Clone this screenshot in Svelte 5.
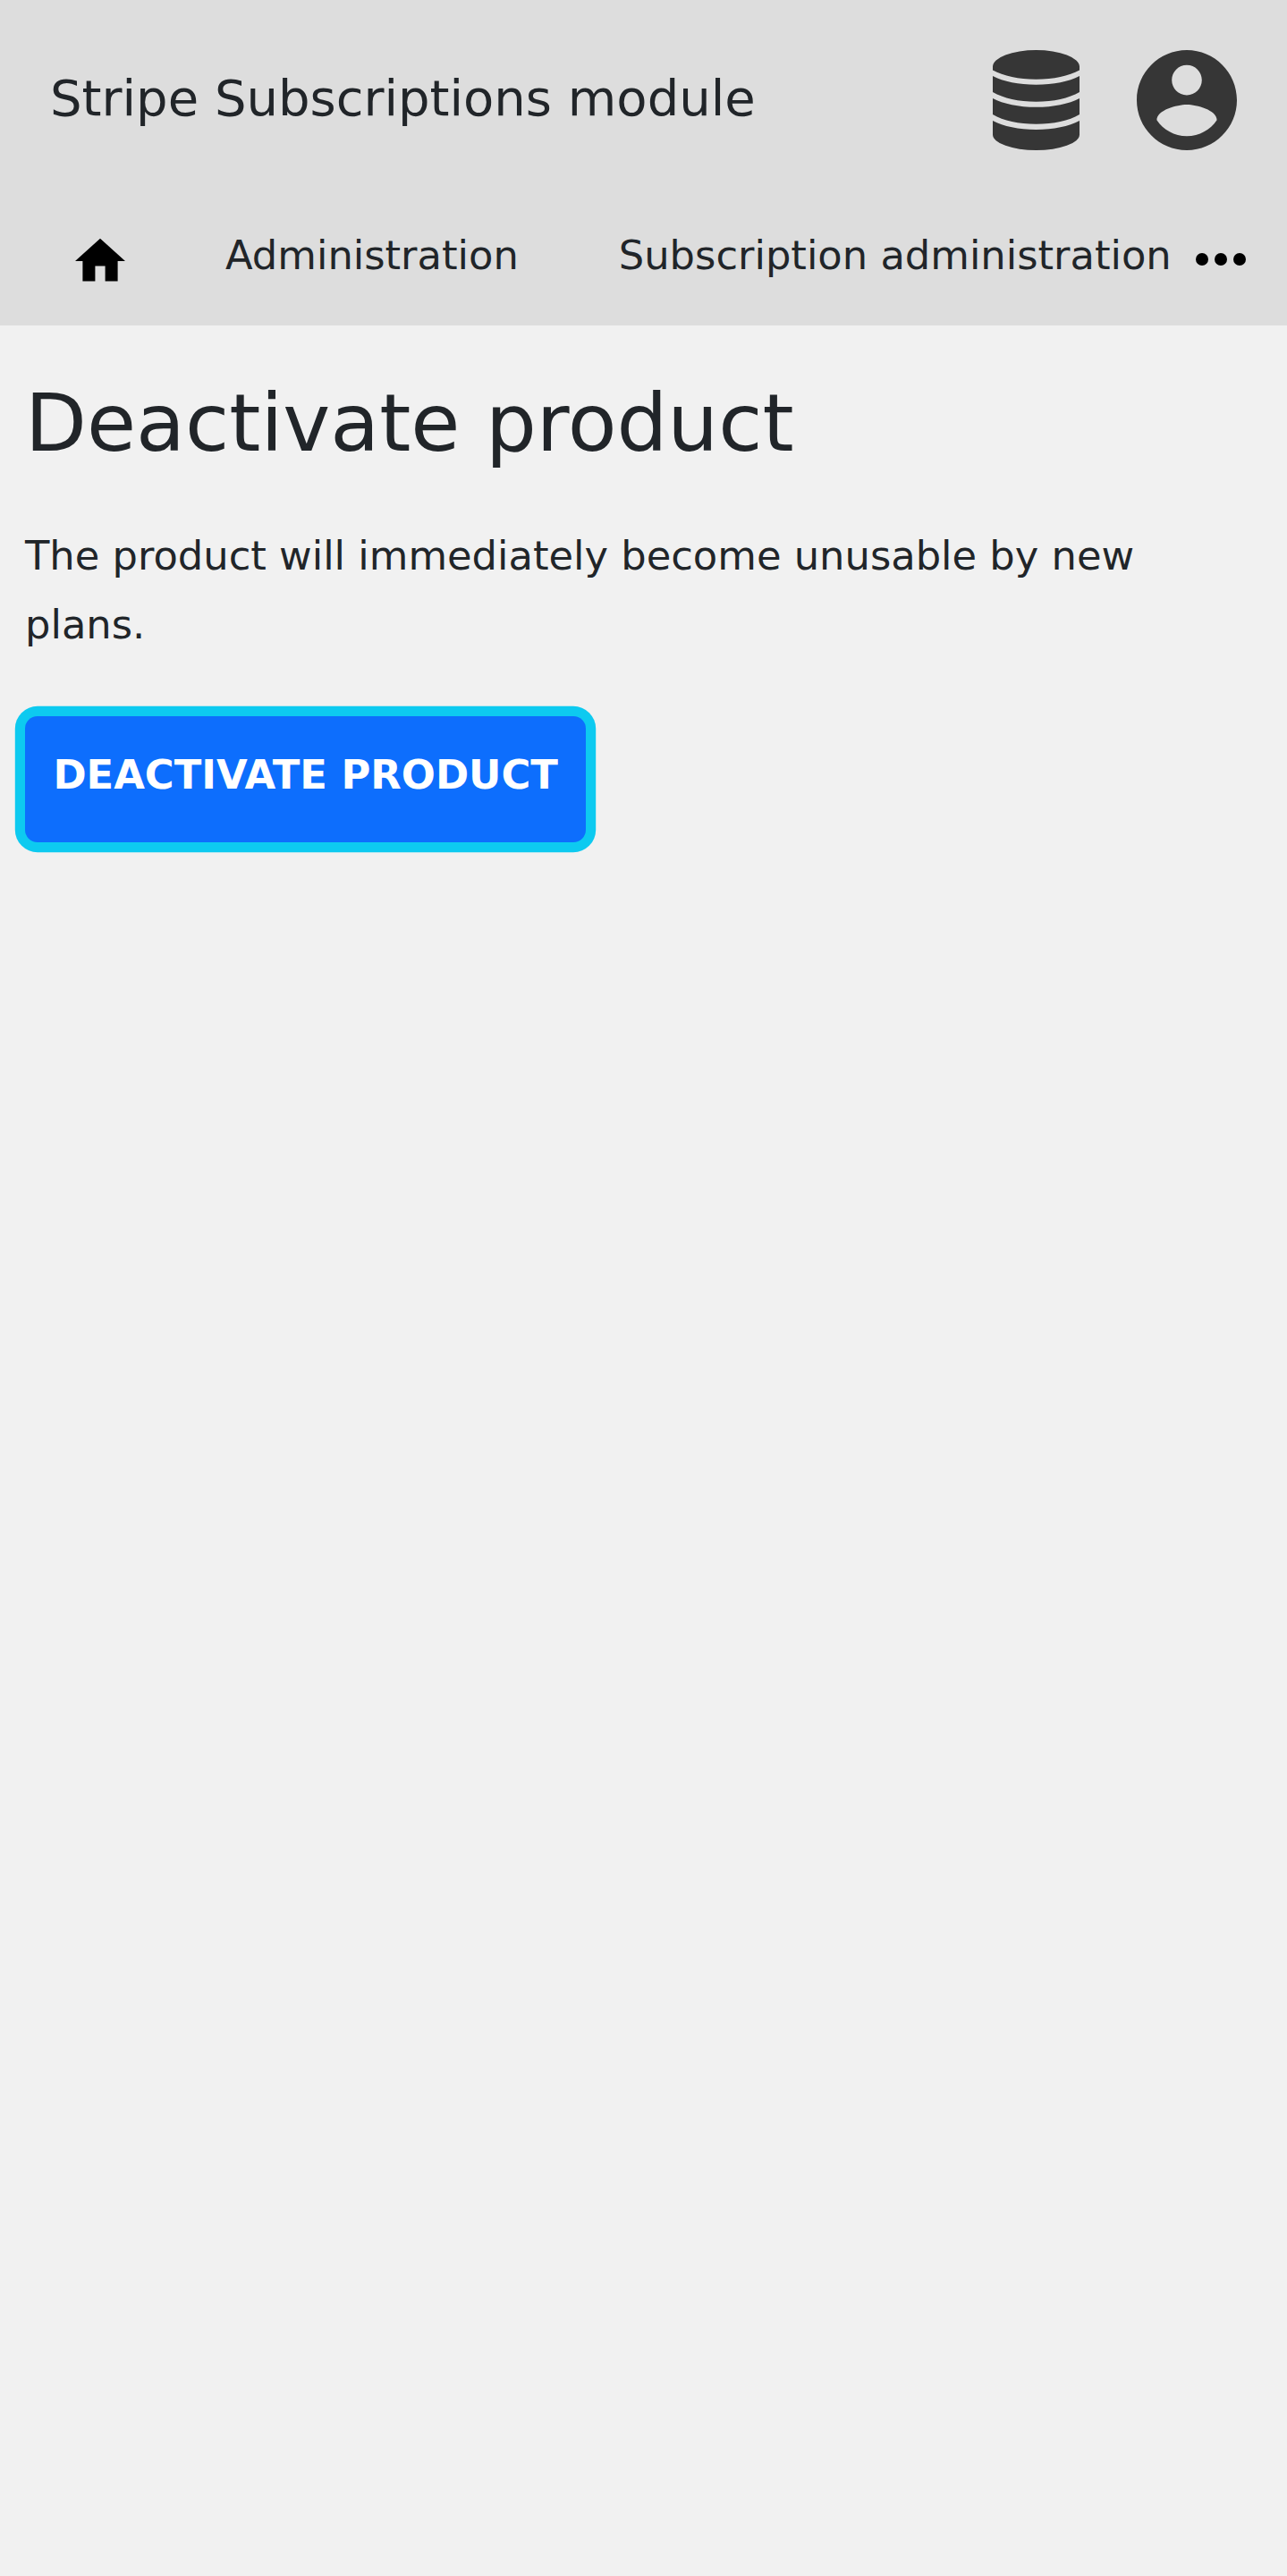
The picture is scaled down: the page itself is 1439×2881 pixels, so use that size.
<script>
  const links = ['Administration', 'Subscription administration'];
</script>

<header>
  <div class="bar">
    <span class="title">Stripe Subscriptions module</span>
    <div class="actions">
      <svg class="db" viewBox="0 0 97 112" aria-label="Database">
        <path d="M0 18.500A48.500 18.500 0 0 1 97 18.500V22.500C85 29 68 32.700 48.500 32.700S12 29 0 22.500Z" />
        <path d="M0 29C12 35.300 29 38.700 48.500 38.700S85 35.300 97 29V47C85 54 68 57.700 48.500 57.700S12 54 0 47Z" />
        <path d="M0 54C12 60.300 29 63.800 48.500 63.800S85 60.300 97 54V72C85 79 68 82.800 48.500 82.800S12 79 0 72Z" />
        <path d="M0 79C12 85.300 29 88.900 48.500 88.900S85 85.300 97 79V94.500A48.500 17.500 0 0 1 0 94.500Z" />
      </svg>
      <svg class="account" viewBox="2 2 20 20" aria-label="Account">
        <path d="M12 2C6.480 2 2 6.480 2 12s4.480 10 10 10 10-4.480 10-10S17.520 2 12 2zm0 3c1.660 0 3 1.340 3 3s-1.340 3-3 3-3-1.340-3-3 1.340-3 3-3zm0 14.200c-2.500 0-4.710-1.280-6-3.220.030-1.990 4-3.080 6-3.080 1.990 0 5.970 1.090 6 3.080-1.290 1.940-3.500 3.220-6 3.220z" />
      </svg>
    </div>
  </div>
  <nav>
    <svg class="home" viewBox="-0.143 -0.143 24.286 24.286" aria-label="Home">
      <path d="M10 20v-6h4v6h5v-8h3L12 3 2 12h3v8z" />
    </svg>
    {#each links as link}
      <a href="#top">{link}</a>
    {/each}
    <svg class="more" viewBox="0 0 56 14" aria-label="More">
      <circle cx="7" cy="7" r="7" /><circle cx="28" cy="7" r="7" /><circle cx="49" cy="7" r="7" />
    </svg>
  </nav>
</header>
<main>
  <h1>Deactivate product</h1>
  <p>The product will immediately become unusable by new plans.</p>
  <button>Deactivate product</button>
</main>

<style>
  :global(body) {
    background: #f1f1f1;
    color: #212529;
    font: 44.8px/77px "DejaVu Sans", sans-serif;
  }
  header {
    height: 364px;
    background: #ddd;
  }
  .bar {
    display: flex;
    justify-content: space-between;
    height: 168px;
    padding: 56px 56px 0;
    box-sizing: border-box;
  }
  .title {
    font-size: 56px;
    line-height: 108px;
    white-space: nowrap;
  }
  .actions {
    display: flex;
    gap: 64px;
    fill: #363636;
  }
  .db {
    width: 97px;
    height: 112px;
  }
  .account {
    width: 112px;
    height: 112px;
  }
  nav {
    display: flex;
    align-items: flex-start;
    padding: 78px 46px 0 78px;
  }
  .home {
    flex: none;
    width: 68px;
    height: 68px;
    margin: 12px 50px 0 0;
  }
  a {
    flex: none;
    margin: 1px 56px 0;
    color: inherit;
    text-decoration: none;
    white-space: nowrap;
  }
  a:nth-of-type(2) {
    margin-right: 0;
  }
  .more {
    flex: none;
    width: 56px;
    height: 14px;
    margin: 37.300px 0 0 auto;
  }
  main {
    padding: 55px 28px;
  }
  h1 {
    margin: 0;
    font-size: 89.6px;
    font-weight: 400;
    line-height: 108px;
  }
  p {
    margin: 56px 0 64.300px;
  }
  button {
    display: block;
    height: 140.400px;
    padding: 0 30.600px 9px 31.400px;
    border: 0;
    border-radius: 14px;
    box-shadow: 0 0 0 11.200px #0dcaf0;
    background: #0d6efd;
    color: #fff;
    font: bold 44.8px/131px "DejaVu Sans", sans-serif;
    text-transform: uppercase;
    white-space: nowrap;
  }
</style>
